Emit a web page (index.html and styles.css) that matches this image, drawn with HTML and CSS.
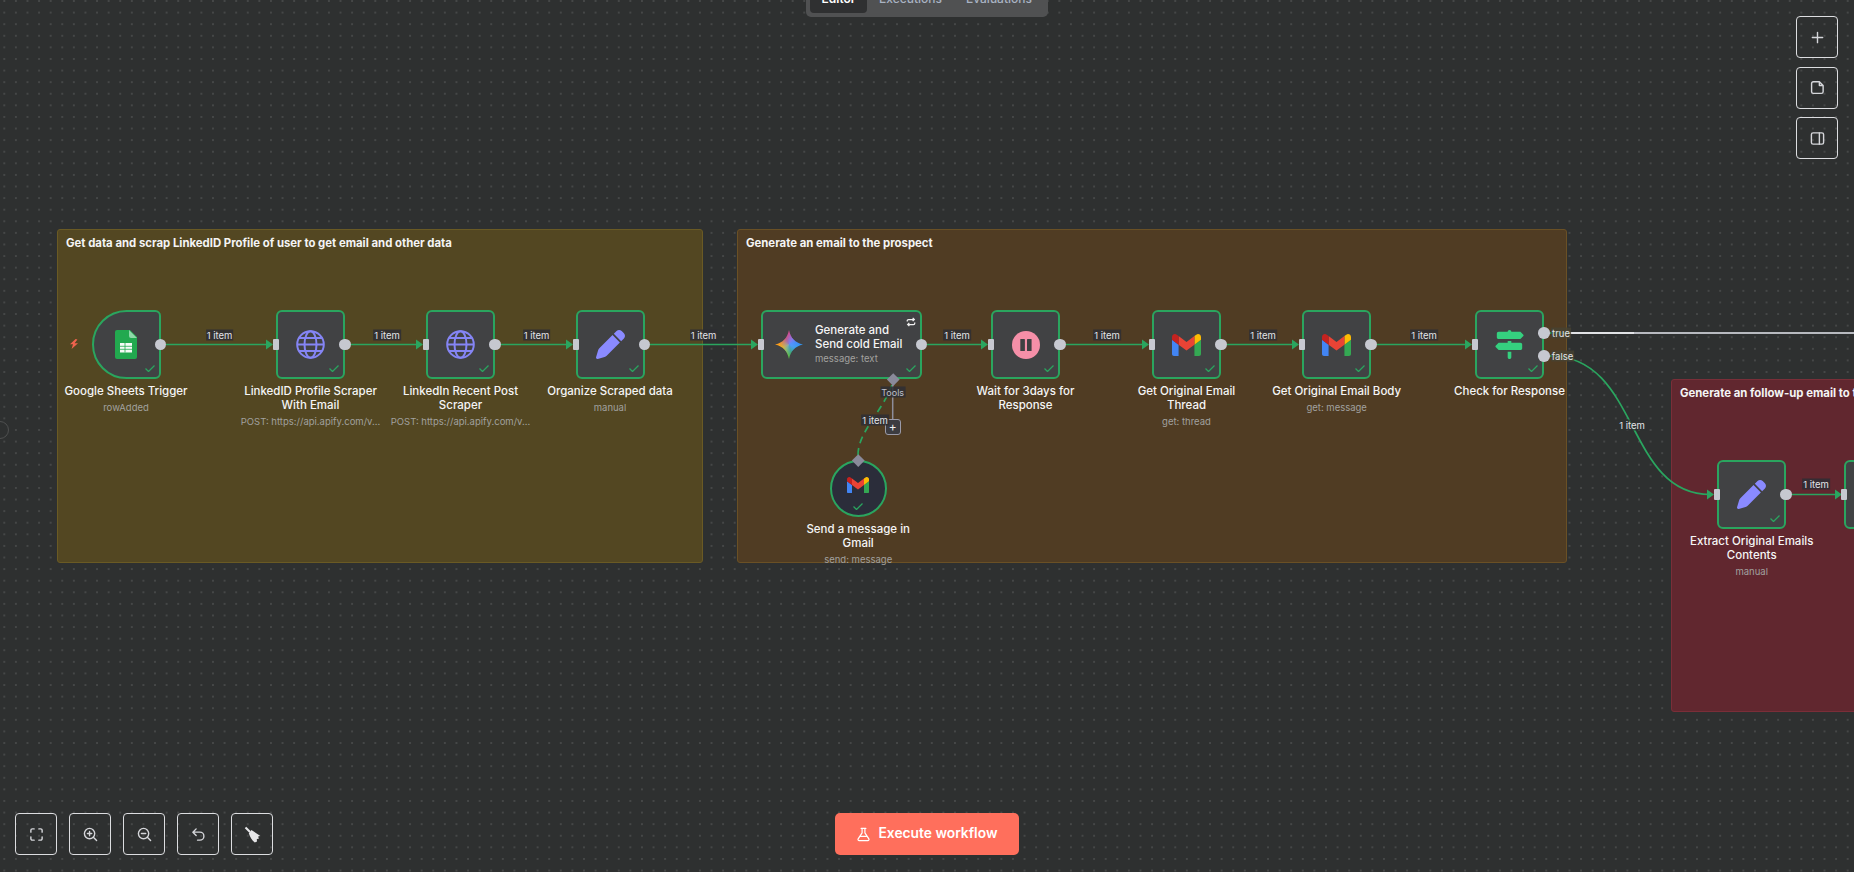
FILE: index.html
```html
<!DOCTYPE html>
<html lang="en">
<head>
<meta charset="utf-8">
<title>Workflow editor</title>
<link rel="stylesheet" href="styles.css">
</head>
<body>
<main class="canvas">
  <div class="tabs">
    <span class="tab tab-active">Editor</span>
    <span class="tab">Executions</span>
    <span class="tab">Evaluations</span>
  </div>

  <section class="sticky s-yellow"><h2>Get data and scrap LinkedID Profile of user to get email and other data</h2></section>
  <section class="sticky s-brown"><h2>Generate an email to the prospect</h2></section>
  <section class="sticky s-red"><h2>Generate an follow-up email to the prospect</h2></section>

  <span class="side-dot"></span>

  <svg class="edges" width="1854" height="872" viewBox="0 0 1854 872" fill="none">
    <g class="edge">
      <path d="M166 344.5H268"/><path d="M350 344.5H418"/><path d="M500 344.5H568"/><path d="M650 344.5H753"/>
      <path d="M927 344.5H983"/><path d="M1065 344.5H1144"/><path d="M1226 344.5H1295"/><path d="M1376 344.5H1467"/>
      <path d="M1550 356C1640 356 1625 494.5 1710 494.5"/><path d="M1791 494.5H1837"/>
      <path d="M1550 333H1572"/>
      <path class="dashed" d="M858 455C858 432 882 412 892 385"/>
    </g>
    <path class="edge-true" d="M1570 333H1854"/>
    <path class="edge-light" d="M1570 333H1634"/>
    <path class="edge-tool" d="M892.7 385V419"/>
    <g class="arrows">
      <path d="M266 339.500l7 5-7 5z"/><path d="M416 339.500l7 5-7 5z"/><path d="M566 339.500l7 5-7 5z"/><path d="M751 339.500l7 5-7 5z"/>
      <path d="M981 339.500l7 5-7 5z"/><path d="M1142 339.500l7 5-7 5z"/><path d="M1292 339.500l7 5-7 5z"/><path d="M1465 339.500l7 5-7 5z"/>
      <path d="M1707 489.500l7 5-7 5z"/><path d="M1835 489.500l7 5-7 5z"/>
    </g>
  </svg>

  <span class="elabel l1">1 item</span>
  <span class="elabel l2">1 item</span>
  <span class="elabel l3">1 item</span>
  <span class="elabel l4">1 item</span>
  <span class="elabel l5">1 item</span>
  <span class="elabel l6">1 item</span>
  <span class="elabel l7">1 item</span>
  <span class="elabel l8">1 item</span>
  <span class="elabel l9">1 item</span>
  <span class="elabel l10">1 item</span>
  <span class="elabel l11">1 item</span>
  <span class="elabel l-tools">Tools</span>
  <span class="elabel l-true">true</span>
  <span class="elabel l-false">false</span>

  <svg class="bolt" viewBox="0 0 10 10"><path d="M6.6 0 1 5.2h3L2.6 10 9 4.2H5.6L8.4 .6z"/></svg>

  <article class="node n1">
    <div class="box box-trigger">
      <svg class="ico-sheet" viewBox="0 0 22 29"><path fill="#22a94f" d="M2 0h13l7 7v20a2 2 0 0 1-2 2H2a2 2 0 0 1-2-2V2a2 2 0 0 1 2-2z"/><path fill="#8ed8a8" d="M14 0l8 8h-6a2 2 0 0 1-2-2z"/><path fill="#f4fbf6" d="M5 13h12v9.500H5z"/><path stroke="#22a94f" stroke-width=".8" d="M5 16.300h12M5 19.300h12M10 13v9.500"/></svg>
      <svg class="check" viewBox="0 0 10 7"><path d="M.5 3.500 3.500 6.500 9.500.5"/></svg>
      <span class="out"></span>
    </div>
    <div class="label"><div class="name">Google Sheets Trigger</div><div class="sub">rowAdded</div></div>
  </article>

  <article class="node n2">
    <div class="box">
      <svg class="ico-globe" viewBox="0 0 29 29"><circle cx="14.500" cy="14.500" r="13.300"/><ellipse cx="14.500" cy="14.500" rx="6" ry="13.300"/><path d="M1.200 14.500h26.600M3 8h23M3 21h23"/></svg>
      <svg class="check" viewBox="0 0 10 7"><path d="M.5 3.500 3.500 6.500 9.500.5"/></svg>
      <span class="in"></span><span class="out"></span>
    </div>
    <div class="label"><div class="name">LinkedID Profile Scraper<br>With Email</div><div class="sub">POST: https://api.apify.com/v...</div></div>
  </article>

  <article class="node n3">
    <div class="box">
      <svg class="ico-globe" viewBox="0 0 29 29"><circle cx="14.500" cy="14.500" r="13.300"/><ellipse cx="14.500" cy="14.500" rx="6" ry="13.300"/><path d="M1.200 14.500h26.600M3 8h23M3 21h23"/></svg>
      <svg class="check" viewBox="0 0 10 7"><path d="M.5 3.500 3.500 6.500 9.500.5"/></svg>
      <span class="in"></span><span class="out"></span>
    </div>
    <div class="label"><div class="name">LinkedIn Recent Post<br>Scraper</div><div class="sub">POST: https://api.apify.com/v...</div></div>
  </article>

  <article class="node n4">
    <div class="box">
      <svg class="ico-pen" viewBox="0 0 512 512"><path d="M362.700 19.300 314.300 67.700 444.300 197.700l48.400-48.400c25-25 25-65.500 0-90.500L453.300 19.300c-25-25-65.500-25-90.500 0zm-71 71L58.600 323.500c-10.400 10.400-18 23.300-22.200 37.400L1 481.200C-1.500 489.700.8 498.800 7 505s15.300 8.500 23.700 6.100l120.300-35.400c14.100-4.200 27-11.800 37.400-22.200L421.700 220.300 291.700 90.300z"/></svg>
      <svg class="check" viewBox="0 0 10 7"><path d="M.5 3.500 3.500 6.500 9.500.5"/></svg>
      <span class="in"></span><span class="out"></span>
    </div>
    <div class="label"><div class="name">Organize Scraped data</div><div class="sub">manual</div></div>
  </article>

  <article class="node n5 node-wide">
    <div class="box box-wide">
      <span class="gemini"></span>
      <div class="wide-text"><div class="wide-name">Generate and<br>Send cold Email</div><div class="sub">message: text</div></div>
      <svg class="loop" viewBox="0 0 12 12"><path d="M1.500 5.500V4.500a1.500 1.500 0 0 1 1.500-1.500h7M8 1l2 2-2 2M10.500 6.500v1a1.500 1.500 0 0 1-1.500 1.500H2M4 11 2 9l2-2"/></svg>
      <svg class="check" viewBox="0 0 10 7"><path d="M.5 3.500 3.500 6.500 9.500.5"/></svg>
      <span class="in"></span><span class="out"></span>
      <span class="diamond d-bottom"></span>
    </div>
  </article>
  <button class="tool-plus" type="button">+</button>

  <article class="node n6">
    <div class="box">
      <svg class="ico-pause" viewBox="0 0 28 28"><circle cx="14" cy="14" r="14" fill="#f58fa8"/><rect x="8.300" y="8" width="4.600" height="12" rx=".6" fill="#3f4042"/><rect x="15" y="8" width="4.600" height="12" rx=".6" fill="#3f4042"/></svg>
      <svg class="check" viewBox="0 0 10 7"><path d="M.5 3.500 3.500 6.500 9.500.5"/></svg>
      <span class="in"></span><span class="out"></span>
    </div>
    <div class="label"><div class="name">Wait for 3days for<br>Response</div></div>
  </article>

  <article class="node n7">
    <div class="box">
      <svg class="ico-gmail" viewBox="52 42 88 66"><path fill="#4285f4" d="M58 108h14V74L52 59v43c0 3.320 2.690 6 6 6"/><path fill="#34a853" d="M120 108h14c3.320 0 6-2.690 6-6V59l-20 15"/><path fill="#fbbc04" d="M120 48v26l20-15v-8c0-7.420-8.470-11.650-14.400-7.200"/><path fill="#ea4335" d="M72 74V48l24 18 24-18v26L96 92"/><path fill="#c5221f" d="M52 51v8l20 15V48l-5.600-4.200c-5.940-4.450-14.400-.22-14.400 7.200"/></svg>
      <svg class="check" viewBox="0 0 10 7"><path d="M.5 3.500 3.500 6.500 9.500.5"/></svg>
      <span class="in"></span><span class="out"></span>
    </div>
    <div class="label"><div class="name">Get Original Email<br>Thread</div><div class="sub">get: thread</div></div>
  </article>

  <article class="node n8">
    <div class="box">
      <svg class="ico-gmail" viewBox="52 42 88 66"><path fill="#4285f4" d="M58 108h14V74L52 59v43c0 3.320 2.690 6 6 6"/><path fill="#34a853" d="M120 108h14c3.320 0 6-2.690 6-6V59l-20 15"/><path fill="#fbbc04" d="M120 48v26l20-15v-8c0-7.420-8.470-11.650-14.400-7.200"/><path fill="#ea4335" d="M72 74V48l24 18 24-18v26L96 92"/><path fill="#c5221f" d="M52 51v8l20 15V48l-5.600-4.200c-5.940-4.450-14.400-.22-14.400 7.200"/></svg>
      <svg class="check" viewBox="0 0 10 7"><path d="M.5 3.500 3.500 6.500 9.500.5"/></svg>
      <span class="in"></span><span class="out"></span>
    </div>
    <div class="label"><div class="name">Get Original Email Body</div><div class="sub">get: message</div></div>
  </article>

  <article class="node n9">
    <div class="box">
      <svg class="ico-signs" viewBox="0 0 512 512"><path d="M224 32H64C46.300 32 32 46.300 32 64v64c0 17.700 14.300 32 32 32H441.400c4.200 0 8.300-1.700 11.300-4.700l48-48c6.200-6.200 6.200-16.400 0-22.600l-48-48c-3-3-7.100-4.700-11.300-4.700H288c0-17.700-14.300-32-32-32s-32 14.300-32 32zM480 256c0-17.700-14.300-32-32-32H288V192H224v32H70.600c-4.200 0-8.300 1.700-11.300 4.700l-48 48c-6.200 6.200-6.200 16.400 0 22.600l48 48c3 3 7.100 4.700 11.300 4.700H448c17.700 0 32-14.300 32-32V256zM288 480V384H224v96c0 17.700 14.300 32 32 32s32-14.300 32-32z"/></svg>
      <svg class="check" viewBox="0 0 10 7"><path d="M.5 3.500 3.500 6.500 9.500.5"/></svg>
      <span class="in"></span><span class="out out-true"></span><span class="out out-false"></span>
    </div>
    <div class="label"><div class="name">Check for Response</div></div>
  </article>

  <article class="node n10">
    <div class="box">
      <svg class="ico-pen" viewBox="0 0 512 512"><path d="M362.700 19.300 314.300 67.700 444.300 197.700l48.400-48.400c25-25 25-65.500 0-90.500L453.300 19.300c-25-25-65.500-25-90.500 0zm-71 71L58.600 323.500c-10.400 10.400-18 23.300-22.200 37.400L1 481.200C-1.500 489.700.8 498.800 7 505s15.300 8.500 23.700 6.100l120.300-35.400c14.100-4.200 27-11.800 37.400-22.200L421.700 220.300 291.700 90.300z"/></svg>
      <svg class="check" viewBox="0 0 10 7"><path d="M.5 3.500 3.500 6.500 9.500.5"/></svg>
      <span class="in"></span><span class="out"></span>
    </div>
    <div class="label"><div class="name">Extract Original Emails<br>Contents</div><div class="sub">manual</div></div>
  </article>

  <article class="node n11">
    <div class="box"><span class="in"></span></div>
  </article>

  <article class="node n12 node-tool">
    <div class="box box-circle">
      <svg class="ico-gmail ico-gmail-sm" viewBox="52 42 88 66"><path fill="#4285f4" d="M58 108h14V74L52 59v43c0 3.320 2.690 6 6 6"/><path fill="#34a853" d="M120 108h14c3.320 0 6-2.690 6-6V59l-20 15"/><path fill="#fbbc04" d="M120 48v26l20-15v-8c0-7.420-8.470-11.650-14.400-7.200"/><path fill="#ea4335" d="M72 74V48l24 18 24-18v26L96 92"/><path fill="#c5221f" d="M52 51v8l20 15V48l-5.600-4.200c-5.940-4.450-14.400-.22-14.400 7.200"/></svg>
      <svg class="check check-center" viewBox="0 0 10 7"><path d="M.5 3.500 3.500 6.500 9.500.5"/></svg>
      <span class="diamond d-top"></span>
    </div>
    <div class="label label-tool"><div class="name">Send a message in<br>Gmail</div><div class="sub">send: message</div></div>
  </article>

  <div class="panel-right">
    <button class="ctl" type="button"><svg viewBox="0 0 16 16"><path d="M8 2.500v11M2.500 8h11"/></svg></button>
    <button class="ctl" type="button"><svg viewBox="0 0 16 16"><path d="M3.500 1.800h6.500l4 4v6.700a1.800 1.800 0 0 1-1.800 1.800H3.500a1.800 1.800 0 0 1-1.800-1.800V3.600a1.800 1.800 0 0 1 1.800-1.800zM10 1.800v4h4"/></svg></button>
    <button class="ctl" type="button"><svg viewBox="0 0 16 16"><rect x="1.500" y="2" width="13" height="12" rx="1.800"/><path d="M10 2v12"/></svg></button>
  </div>

  <div class="panel-left">
    <button class="ctl" type="button"><svg viewBox="0 0 16 16"><path d="M2 5.500V3.500A1.500 1.500 0 0 1 3.500 2h2M10.500 2h2A1.500 1.500 0 0 1 14 3.500v2M14 10.500v2a1.500 1.500 0 0 1-1.500 1.500h-2M5.500 14h-2A1.500 1.500 0 0 1 2 12.500v-2"/></svg></button>
    <button class="ctl" type="button"><svg viewBox="0 0 16 16"><circle cx="7" cy="7" r="5.500"/><path d="M11 11l3.500 3.500M7 4.700v4.600M4.700 7h4.600"/></svg></button>
    <button class="ctl" type="button"><svg viewBox="0 0 16 16"><circle cx="7" cy="7" r="5.500"/><path d="M11 11l3.500 3.500M4.700 7h4.600"/></svg></button>
    <button class="ctl" type="button"><svg viewBox="0 0 16 16"><path d="M5.500 2 2 5.500 5.500 9M2 5.500h7.500a4 4 0 0 1 0 8.500H7"/></svg></button>
    <button class="ctl" type="button"><svg class="solid broom" viewBox="0 0 17 17"><path d="M.8 2.200 2.200.8 6.800 5.300 5.300 6.800z"/><path d="M4.800 7.200 7.500 4 16 9.800 14.200 10.600 14.800 12.800 12.800 13 13 15.500 10.800 16.500C8 14.500 6 11 4.800 7.200z"/></svg></button>
  </div>

  <button class="execute" type="button">
    <svg viewBox="0 0 16 16"><path d="M5.500 1.500h5M6.500 1.500v4.700L2.300 12.600a1.300 1.300 0 0 0 1.100 2h9.200a1.300 1.300 0 0 0 1.100-2L9.500 6.200V1.500M4.500 10h7"/></svg>
    <span>Execute workflow</span>
  </button>
</main>
</body>
</html>
```
FILE: styles.css
```css
* { box-sizing: border-box; }
html, body { margin: 0; padding: 0; height: 100%; }
body { font-family: Inter, "Liberation Sans", sans-serif; background: #2e3030; overflow: hidden; }

.canvas {
  position: relative;
  width: 1854px;
  height: 872px;
  overflow: hidden;
  background-color: #2e3030;
  background-image: radial-gradient(circle at center, #7c7e7e 0, #6a6c6c .5px, transparent .8px);
  background-size: 11.6px 11.6px;
  background-position: -1.5px -4.8px;
}

/* view switcher */
.tabs {
  position: absolute;
  top: -17px;
  left: 806px;
  width: 242px;
  height: 34px;
  padding: 4px;
  display: flex;
  background: #505152;
  border-radius: 5px;
  font-size: 12px;
  font-weight: 500;
  color: #a9b3c2;
}
.tab { padding: 0 12px; height: 26px; line-height: 23px; border-radius: 4px; white-space: nowrap; }
.tab-active { background: #2f3031; color: #fff; font-weight: 600; padding: 0 11.500px; }

/* sticky notes */
.sticky { position: absolute; border: 1px solid; border-radius: 3px; padding: 6px 8px; }
.sticky h2 { margin: 0; font-size: 11.360px; line-height: 15px; font-weight: 700; color: #f4f4f4; white-space: nowrap; }
.s-yellow { left: 57px; top: 229px; width: 646px; height: 334px; background: #534722; border-color: #6a5a24; }
.s-brown { left: 737px; top: 229px; width: 830px; height: 334px; background: #503c23; border-color: #6a5025; }
.s-red { left: 1671px; top: 379px; width: 400px; height: 333px; background: #61272f; border-color: #7a2e38; }

.side-dot { position: absolute; left: -9px; top: 421px; width: 18px; height: 18px; border: 1px solid #4f5050; border-radius: 50%; background: #2e3030; }

/* edges */
.edges { position: absolute; left: 0; top: 0; }
.edge path { stroke: #2aa55f; stroke-width: 1.700px; }
.edge .dashed { stroke-dasharray: 7 5; }
.edge-true { stroke: #b8bac0; stroke-width: 2px; }
.edge-light { stroke: #e2e3e6; stroke-width: 2px; }
.edge-tool { stroke: #8d8d9b; stroke-width: 1.500px; }
.arrows path { fill: #2aa55f; }

.elabel {
  position: absolute;
  transform: translate(-50%, -50%);
  padding: 0 1px;
  font-size: 9.500px;
  line-height: 11px;
  color: #e2e3e8;
  background: rgba(46, 46, 52, .85);
  white-space: nowrap;
}
.l1 { left: 219.500px; top: 335px; }
.l2 { left: 387px; top: 335px; }
.l3 { left: 536.500px; top: 335px; }
.l4 { left: 703.500px; top: 335px; }
.l5 { left: 957px; top: 335px; }
.l6 { left: 1107px; top: 335px; }
.l7 { left: 1263px; top: 335px; }
.l8 { left: 1424px; top: 335px; }
.l9 { left: 1632px; top: 425px; background: rgba(46, 48, 48, .75); }
.l10 { left: 1816px; top: 484px; }
.l11 { left: 875px; top: 419.500px; z-index: 2; }
.l-tools { left: 892.700px; top: 391.500px; font-size: 9px; color: #bfc0cc; }
.l-true { left: 1561px; top: 333px; background: rgba(70, 66, 50, .8); }
.l-false { left: 1562.500px; top: 356px; background: rgba(70, 66, 50, .8); }

.bolt { position: absolute; left: 69px; top: 339px; width: 10px; height: 10px; fill: #f0634e; }

/* nodes */
.node { position: absolute; width: 69px; top: 310px; display: flex; flex-direction: column; align-items: center; }
.n1 { left: 91.500px; }
.n2 { left: 276px; }
.n3 { left: 426px; }
.n4 { left: 575.500px; }
.n5 { left: 760.500px; width: 161px; }
.n6 { left: 991px; }
.n7 { left: 1152px; }
.n8 { left: 1302.200px; }
.n9 { left: 1475px; }
.n10 { left: 1717.200px; top: 460px; }
.n11 { left: 1844.200px; top: 460px; }
.n12 { left: 829.700px; top: 460px; width: 57px; }

.box {
  position: relative;
  flex: none;
  width: 100%;
  height: 69px;
  display: flex;
  align-items: center;
  justify-content: center;
  background: #414244;
  border: 2px solid #2aa55f;
  border-radius: 6px;
}
.box-trigger { border-radius: 36px 6px 6px 36px; }
.box-wide { justify-content: flex-start; padding-left: 12.500px; gap: 12px; }
.box-circle { height: 57px; border-radius: 50%; background: #2b2d3a; padding-bottom: 7px; }

.in { position: absolute; left: -5px; top: 27px; width: 6px; height: 11px; background: #c6c8d0; border-radius: 1px; }
.out { position: absolute; right: -7.500px; top: 26.750px; width: 11.500px; height: 11.500px; background: #c6c8d0; border-radius: 50%; }
.out-true { top: 15.250px; }
.out-false { top: 38.250px; }

.check { position: absolute; right: 4px; bottom: 5.300px; width: 10px; height: 7px; fill: none; stroke: #2aa55f; stroke-width: 1.300px; }
.check-center { right: auto; left: 50%; margin-left: -5px; bottom: 5.500px; }

.diamond { position: absolute; width: 8.500px; height: 8.500px; background: #8a8a9a; transform: rotate(45deg); }
.d-bottom { left: 126px; bottom: -6.250px; }
.d-top { left: 22.250px; top: -6.250px; }

.label { width: 190px; margin-top: 5px; text-align: center; flex: none; }
.name { font-size: 11.500px; line-height: 14.200px; font-weight: 500; color: #f5f5f5; white-space: nowrap; }
.sub { margin-top: 2.300px; font-size: 9.500px; line-height: 14px; color: #a1a19f; white-space: nowrap; }

.wide-text { text-align: left; }
.wide-name { font-size: 11.500px; line-height: 14.200px; font-weight: 500; color: #f5f5f5; white-space: nowrap; }
.wide-text .sub { margin-top: 1.500px; line-height: 14px; }

.ico-globe { width: 29px; height: 29px; fill: none; stroke: #8585f5; stroke-width: 2; }
.ico-pen { width: 29px; height: 29px; fill: #8a8aff; }
.ico-sheet { width: 22px; height: 29px; }
.ico-gmail { width: 29px; height: 22px; }
.ico-gmail-sm { width: 22px; height: 16.500px; }
.ico-pause { width: 28px; height: 28px; }
.ico-signs { width: 29px; height: 29px; fill: #35d07f; }

.gemini {
  flex: none;
  width: 28px;
  height: 29px;
  background:
    radial-gradient(circle at 58% 50%, rgba(90, 150, 255, .85) 0, rgba(90, 150, 255, .3) 35%, transparent 55%),
    conic-gradient(from -25deg at 50% 50%, #ee3f5a 0deg, #b05ad8 55deg, #2f86f8 100deg, #25a8d8 140deg, #2fae55 190deg, #a8d030 235deg, #fdbb05 270deg, #f77f30 320deg, #ee3f5a 360deg);
  clip-path: path("M14 0C15.800 8.200 19.800 12.500 28 14.500C19.800 16.500 15.800 20.800 14 29C12.200 20.800 8.200 16.500 0 14.500C8.200 12.500 12.200 8.200 14 0Z");
}

.loop { position: absolute; right: 4px; top: 5px; width: 10px; height: 10px; fill: none; stroke: #f0f0f0; stroke-width: 1.500px; }

.tool-plus {
  position: absolute;
  left: 885px;
  top: 419px;
  width: 15.500px;
  height: 15.500px;
  padding: 0;
  display: flex;
  align-items: center;
  justify-content: center;
  background: #3c3c40;
  border: 1.500px solid #9a9aa8;
  border-radius: 3px;
  color: #f0f0f0;
  font: 400 12px/1 Inter, sans-serif;
}

/* controls */
.panel-right { position: absolute; right: 16px; top: 16px; display: flex; flex-direction: column; gap: 8.500px; }
.panel-left { position: absolute; left: 15px; top: 813px; display: flex; gap: 12px; }
.ctl {
  width: 42px;
  height: 42px;
  padding: 0;
  display: flex;
  align-items: center;
  justify-content: center;
  background: transparent;
  border: 1px solid #dcdde0;
  border-radius: 4px;
}
.ctl svg { width: 15px; height: 15px; fill: none; stroke: #d5d6da; stroke-width: 1.500px; stroke-linecap: round; stroke-linejoin: round; }
.ctl svg.solid { fill: #e6e6e8; stroke: none; }
.ctl svg.broom { width: 17px; height: 17px; }

.execute {
  position: absolute;
  left: 835.300px;
  top: 813px;
  width: 183.400px;
  height: 42px;
  display: flex;
  align-items: center;
  justify-content: center;
  gap: 7px;
  padding: 0;
  background: #ff6f5c;
  border: 0;
  border-radius: 5px;
  color: #fff;
  font: 600 13.800px/1 Inter, sans-serif;
}
.execute svg { width: 15px; height: 15px; fill: none; stroke: #fff; stroke-width: 1.300px; stroke-linejoin: round; stroke-linecap: round; }
```
